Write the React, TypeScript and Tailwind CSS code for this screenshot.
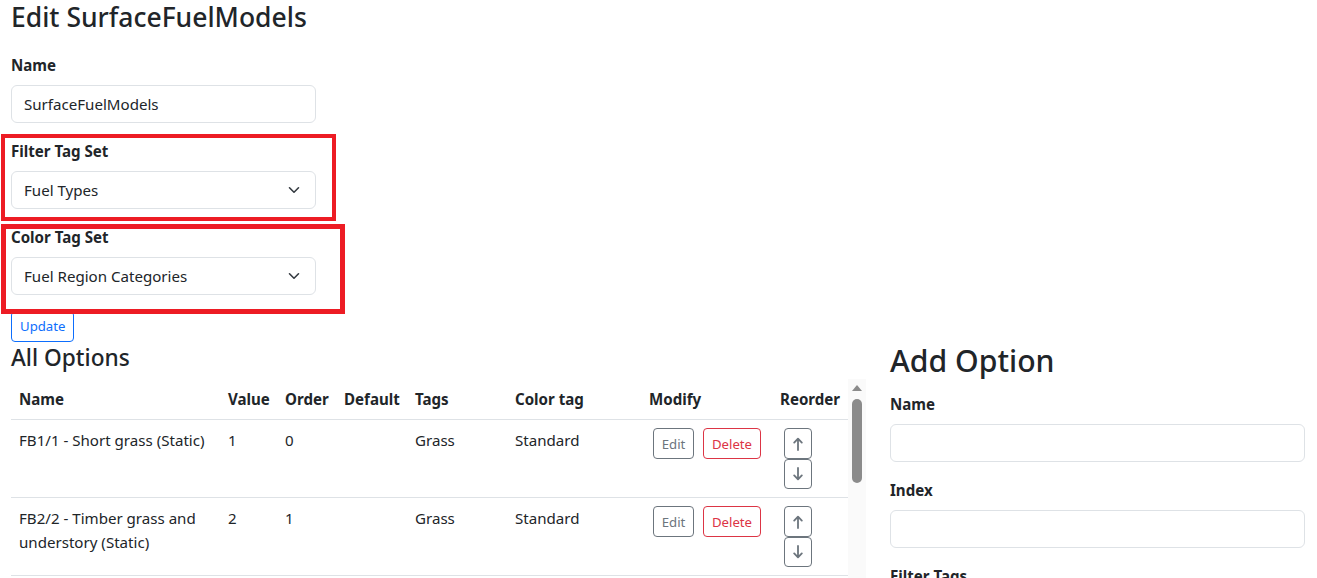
import React from "react";

function Chevron() {
  return (
    <svg width="12" height="8" viewBox="0 0 12 8" fill="none">
      <path d="M1.5 1.8 L6 6.2 L10.5 1.8" stroke="#343a40" strokeWidth="1.6" strokeLinecap="round" strokeLinejoin="round" />
    </svg>
  );
}

function ArrowUp() {
  return (
    <svg width="10" height="14" viewBox="0 0 10 14" fill="none">
      <path d="M5 13 V1.8 M1.2 5.6 L5 1.6 L8.8 5.6" stroke="#6c757d" strokeWidth="1.8" strokeLinecap="round" strokeLinejoin="round" />
    </svg>
  );
}

function ArrowDown() {
  return (
    <svg width="10" height="14" viewBox="0 0 10 14" fill="none">
      <path d="M5 1 V12.2 M1.2 8.4 L5 12.4 L8.8 8.4" stroke="#6c757d" strokeWidth="1.8" strokeLinecap="round" strokeLinejoin="round" />
    </svg>
  );
}

function Field({ label, children }: { label: string; children: React.ReactNode }) {
  return (
    <div className="mb-4">
      <div className="mb-2 font-bold leading-6">{label}</div>
      {children}
    </div>
  );
}

function TextBox({ value, wide }: { value?: string; wide?: boolean }) {
  return (
    <div
      className={`${wide ? "w-[415px]" : "w-[305px]"} flex h-[38px] items-center rounded-[6px] border border-[#dee2e6] px-3 leading-6`}
    >
      {value}
    </div>
  );
}

function SelectBox({ value }: { value: string }) {
  return (
    <div className="flex h-[38px] w-[305px] items-center justify-between rounded-[6px] border border-[#dee2e6] pl-3 pr-[15px] leading-6">
      <span>{value}</span>
      <Chevron />
    </div>
  );
}

const rows = [
  { name: ["FB1/1 - Short grass (Static)"], value: "1", order: "0", tags: "Grass", color: "Standard" },
  { name: ["FB2/2 - Timber grass and", "understory (Static)"], value: "2", order: "1", tags: "Grass", color: "Standard" },
];

export default function App() {
  return (
    <div className="relative h-[578px] w-[1317px] overflow-hidden bg-white font-['Segoe_UI','Noto_Sans',sans-serif] text-[15.1px] leading-6 text-[#212529]">
      <div className="pl-[11px]">
        <h3 className="mb-[19px] pt-px text-[26.5px] font-medium leading-[33px]">Edit SurfaceFuelModels</h3>
        <Field label="Name">
          <TextBox value="SurfaceFuelModels" />
        </Field>
        <Field label="Filter Tag Set">
          <SelectBox value="Fuel Types" />
        </Field>
        <Field label="Color Tag Set">
          <SelectBox value="Fuel Region Categories" />
        </Field>
        <button className="block h-[31px] rounded-[4px] border border-[#0d6efd] px-2 text-[13.2px] leading-[21px] text-[#0d6efd]">
          Update
        </button>

        <div className="flex items-start">
          <div className="w-[855px]">
            <h4 className="mb-[7px] pt-px text-[22.7px] font-medium leading-[29px]">All Options</h4>
            <div className="flex items-start">
              <table className="w-[837px] table-fixed border-collapse text-left">
                <colgroup>
                  <col className="w-[209px]" />
                  <col className="w-[57px]" />
                  <col className="w-[59px]" />
                  <col className="w-[71px]" />
                  <col className="w-[100px]" />
                  <col className="w-[134px]" />
                  <col className="w-[131px]" />
                  <col className="w-[76px]" />
                </colgroup>
                <thead>
                  <tr className="border-b border-[#dee2e6]">
                    {["Name", "Value", "Order", "Default", "Tags", "Color tag", "Modify", "Reorder"].map((h) => (
                      <th key={h} className="px-2 py-2 font-bold leading-6 whitespace-nowrap">
                        {h}
                      </th>
                    ))}
                  </tr>
                </thead>
                <tbody>
                  {rows.map((r, i) => (
                    <tr key={i} className="border-b border-[#dee2e6]">
                      <td className="px-2 py-2 align-top">
                        {r.name.map((n, j) => (
                          <div key={j} className="whitespace-nowrap">
                            {n}
                          </div>
                        ))}
                      </td>
                      <td className="px-2 py-2 align-top">{r.value}</td>
                      <td className="px-2 py-2 align-top">{r.order}</td>
                      <td className="px-2 py-2 align-top"></td>
                      <td className="px-2 py-2 align-top">{r.tags}</td>
                      <td className="px-2 py-2 align-top">{r.color}</td>
                      <td className="px-2 py-2 align-top">
                        <div className="flex gap-[9px] pl-1">
                          <button className="h-[31px] w-[41px] rounded-[4px] border border-[#6c757d] text-[13.2px] leading-[20px] text-[#6c757d]">
                            Edit
                          </button>
                          <button className="h-[31px] w-[58px] rounded-[4px] border border-[#dc3545] text-[13.2px] leading-[20px] text-[#dc3545]">
                            Delete
                          </button>
                        </div>
                      </td>
                      <td className="px-2 py-2 align-top">
                        <div className="flex flex-col pl-1">
                          <button className="flex h-[31px] w-[28px] items-center justify-center rounded-[4px] border border-[#6c757d]">
                            <ArrowUp />
                          </button>
                          <button className="flex h-[30px] w-[28px] items-center justify-center rounded-[4px] border border-[#6c757d]">
                            <ArrowDown />
                          </button>
                        </div>
                      </td>
                    </tr>
                  ))}
                </tbody>
              </table>
              <div className="flex h-[220px] w-[18px] flex-col items-center bg-[#fafafa] pt-[6px]">
                <svg width="10" height="6" viewBox="0 0 10 6">
                  <path d="M0 6 L5 0 L10 6 Z" fill="#8b8b8b" />
                </svg>
                <div className="mt-[8px] h-[84px] w-[10px] rounded-full bg-[#8b8b8b]" />
              </div>
            </div>
          </div>

          <div className="ml-[24px] w-[415px]">
            <h2 className="mb-[12px] text-[30.2px] font-medium leading-[38px]">Add Option</h2>
            <Field label="Name">
              <TextBox wide />
            </Field>
            <Field label="Index">
              <TextBox wide />
            </Field>
            <Field label="Filter Tags">
              <TextBox wide />
            </Field>
          </div>
        </div>
      </div>

      <div className="pointer-events-none absolute left-[1px] top-[134px] h-[87px] w-[335px] border-4 border-[#ed1c24]" />
      <div className="pointer-events-none absolute left-[1px] top-[224px] h-[90px] w-[344px] border-[5px] border-[#ed1c24]" />
    </div>
  );
}
